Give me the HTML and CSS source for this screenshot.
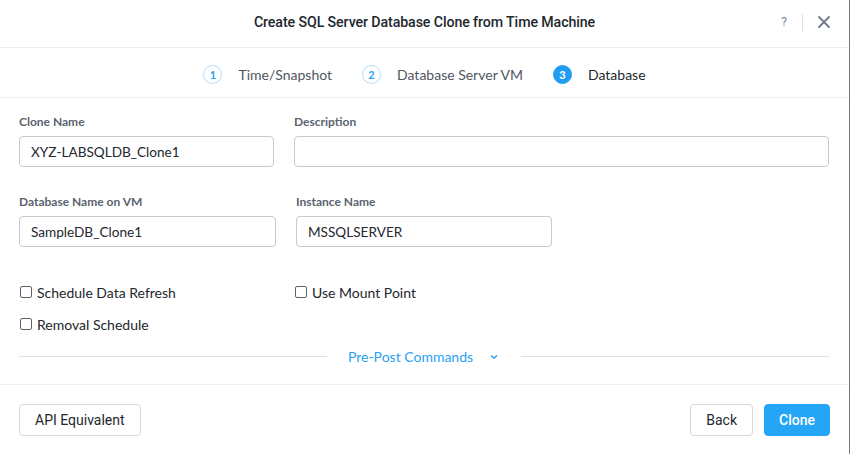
FILE: index.html
```html
<!DOCTYPE html>
<html lang="en">
<head>
<meta charset="utf-8">
<title>Create SQL Server Database Clone from Time Machine</title>
<link rel="stylesheet" href="styles.css">
</head>
<body>
<div class="modal">
  <header class="header">
    <div class="spacer"></div>
    <h1 class="title">Create SQL Server Database Clone from Time Machine</h1>
    <div class="actions">
      <span class="help">?</span>
      <span class="sep"></span>
      <svg class="close" width="12" height="12" viewBox="0 0 12 12"><path d="M1 1 L11 11 M11 1 L1 11" stroke="#6f7a88" stroke-width="1.8" fill="none" stroke-linecap="round"/></svg>
    </div>
  </header>

  <nav class="steps">
    <div class="step"><span class="num">1</span><span class="step-label">Time/Snapshot</span></div>
    <div class="step"><span class="num">2</span><span class="step-label">Database Server VM</span></div>
    <div class="step active"><span class="num">3</span><span class="step-label">Database</span></div>
  </nav>

  <main class="body">
    <div class="form-row">
      <div class="field">
        <label class="label">Clone Name</label>
        <div class="input">XYZ-LABSQLDB_Clone1</div>
      </div>
      <div class="field">
        <label class="label">Description</label>
        <div class="input"></div>
      </div>
    </div>
    <div class="form-row row2">
      <div class="field">
        <label class="label">Database Name on VM</label>
        <div class="input">SampleDB_Clone1</div>
      </div>
      <div class="field">
        <label class="label">Instance Name</label>
        <div class="input short">MSSQLSERVER</div>
      </div>
    </div>

    <div class="checks">
      <div class="check-row">
        <label class="check"><span class="box"></span>Schedule Data Refresh</label>
        <label class="check"><span class="box"></span>Use Mount Point</label>
      </div>
      <div class="check-row">
        <label class="check"><span class="box"></span>Removal Schedule</label>
      </div>
    </div>

    <div class="divider">
      <span class="line"></span>
      <span class="divider-text">Pre-Post Commands</span>
      <svg class="chev" width="8" height="6" viewBox="0 0 8 6"><path d="M1.5 1.8 L4 4.2 L6.5 1.8" stroke="#2a9ff2" stroke-width="1.4" fill="none" stroke-linecap="round" stroke-linejoin="round"/></svg>
      <span class="line"></span>
    </div>
  </main>

  <footer class="footer">
    <button class="btn">API Equivalent</button>
    <div class="right">
      <button class="btn">Back</button>
      <button class="btn primary">Clone</button>
    </div>
  </footer>
</div>
</body>
</html>
```

FILE: styles.css
```css
* { box-sizing: border-box; }
html, body { margin: 0; padding: 0; background: #ffffff; }
body { font-family: Lato, "Open Sans", sans-serif; color: #22272e; }

.modal {
  width: 850px;
  height: 454px;
  border-right: 1px solid #7d7d7d;
  display: flex;
  flex-direction: column;
  background: #fff;
}

.header {
  height: 48px;
  border-bottom: 1px solid #ededed;
  display: grid;
  grid-template-columns: 1fr auto 1fr;
  align-items: center;
  padding-bottom: 3px;
}
.title {
  margin: 0;
  font-family: Roboto, sans-serif;
  font-weight: 500;
  font-size: 14.2px;
  color: #22272e;
  letter-spacing: -0.1px;
}
.actions {
  display: flex;
  justify-content: flex-end;
  align-items: center;
  padding-right: 19px;
}
.help {
  font-family: Roboto, sans-serif;
  font-size: 12px;
  color: #7c8794;
  margin-right: 15px;
}
.sep {
  width: 1px;
  height: 17px;
  background: #dcdfe3;
  margin-right: 15px;
}
.close { display: block; }

.steps {
  height: 50px;
  border-bottom: 1px solid #efefef;
  display: flex;
  justify-content: center;
  align-items: center;
  gap: 30px;
  padding-top: 4px;
}
.step {
  display: flex;
  align-items: center;
  gap: 16px;
  font-size: 14px;
  color: #4f5661;
}
.num {
  width: 19px;
  height: 19px;
  border-radius: 50%;
  border: 1px solid #b9defa;
  color: #2a9ff2;
  font-size: 11px;
  font-weight: 700;
  display: flex;
  align-items: center;
  justify-content: center;
}
.step.active { color: #22272e; }
.step.active .num {
  background: #1f9cf0;
  border-color: #1f9cf0;
  color: #fff;
}

.body {
  flex: 1;
  padding: 17px 20px 0 19px;
}
.form-row {
  display: grid;
  grid-template-columns: 255px 1fr;
  column-gap: 20px;
}
.row2 { margin-top: 28px; grid-template-columns: 257px 1fr; }
.label {
  display: block;
  font-size: 12px;
  font-weight: 700;
  color: #5a6370;
  line-height: 14px;
  margin-bottom: 7px;
}
.input {
  height: 31px;
  border: 1px solid #c6cbd2;
  border-radius: 4px;
  padding: 0 11px;
  display: flex;
  align-items: center;
  font-size: 13.6px;
  color: #22272e;
}
.input.short { width: 256px; }

.checks {
  margin-top: 35px;
  display: flex;
  flex-direction: column;
  gap: 12px;
}
.check-row {
  display: grid;
  grid-template-columns: 275px 1fr;
  height: 20px;
}
.check {
  display: flex;
  align-items: center;
  gap: 5px;
  font-size: 14px;
  color: #22272e;
}
.box {
  width: 12px;
  height: 12px;
  border: 1px solid #5b6573;
  border-radius: 2px;
  margin-left: 1px;
}

.divider {
  margin-top: 12px;
  height: 20px;
  display: flex;
  align-items: center;
}
.line {
  flex: 1;
  height: 1px;
  background: #dfe1e4;
}
.divider-text {
  margin-left: 21px;
  font-size: 14px;
  color: #2a9ff2;
}
.chev { margin: 2px 23px 0 17px; }

.footer {
  height: 70px;
  border-top: 1px solid #efefef;
  display: flex;
  justify-content: space-between;
  align-items: flex-start;
  padding: 19px 19px 0 19px;
}
.right { display: flex; gap: 11px; }
.btn {
  height: 32px;
  padding: 0 14px;
  border: 1px solid #d6d9dd;
  border-radius: 4px;
  background: #fff;
  font-family: Roboto, sans-serif;
  font-size: 14px;
  color: #22272e;
}
.btn.primary {
  background: #24a5f5;
  border-color: #24a5f5;
  color: #fff;
  font-weight: 500;
}
.btn:first-child { padding: 0 15px; }
```
